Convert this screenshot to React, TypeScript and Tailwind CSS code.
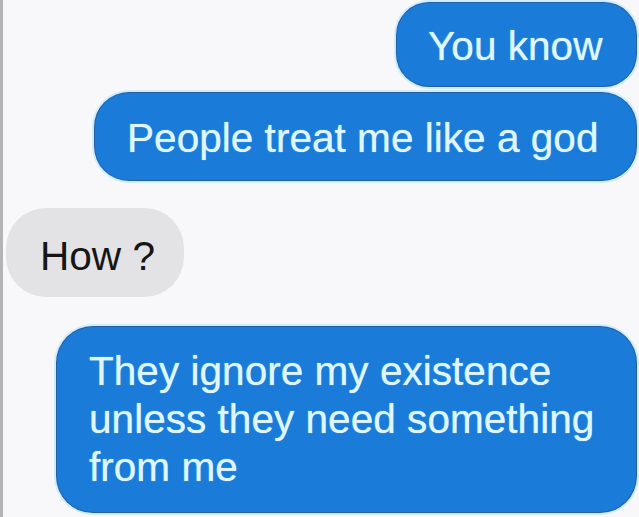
interface Message {
	text: string[];
	mine: boolean;
	width: string;
	pad: string;
	radius: string;
}

function App() {
	const messages: Message[] = [
		{ text: ["You know"], mine: true, width: "w-[239px]", pad: "pt-[19px] pb-[16px] pl-[31px]", radius: "rounded-[32px]" },
		{ text: ["People treat me like a god"], mine: true, width: "w-[541px]", pad: "pt-[21px] pb-[18px] pl-[32px]", radius: "rounded-[34px]" },
		{ text: ["How ?"], mine: false, width: "w-[178px]", pad: "pt-[24px] pb-[17px] pl-[34px]", radius: "rounded-[40px]" },
		{
			text: ["They ignore my existence", "unless they need something", "from me"],
			mine: true,
			width: "w-[579px]",
			pad: "pt-[20px] pb-[21px] pl-[32px]",
			radius: "rounded-[36px]"
		}
	];

	const gaps = ["mt-[3px]", "mt-[7px]", "mt-[28px]", "mt-[30px]"];

	return (
		<div className="w-[639px] h-[517px] overflow-hidden bg-[#f8f7f9] border-l-[3px] border-[#b4b4b4] font-['Liberation_Sans',Arial,sans-serif]">
			<div className="flex flex-col">
				{messages.map((msg, index) => (
					<div
						key={index}
						className={`${gaps[index]} ${msg.mine ? "self-end mr-[3px]" : "self-start ml-[3px]"}`}
					>
						<div
							className={
								msg.mine
									? `${msg.width} ${msg.pad} ${msg.radius} bg-[#1a7bd9] text-[#dff6ff] shadow-[0_0_0_1px_#245fa6,0_0_0_3px_#cdeefe] [text-shadow:0_0_1px_#9fe3ff]`
									: `${msg.width} ${msg.pad} ${msg.radius} bg-[#e3e3e6] text-[#161616]`
							}
						>
							<p className="text-[40.6px] leading-[48px] whitespace-nowrap">
								{msg.text.map((line, i) => (
									<span key={i} className="block">
										{line}
									</span>
								))}
							</p>
						</div>
					</div>
				))}
			</div>
		</div>
	);
}

export default App;
